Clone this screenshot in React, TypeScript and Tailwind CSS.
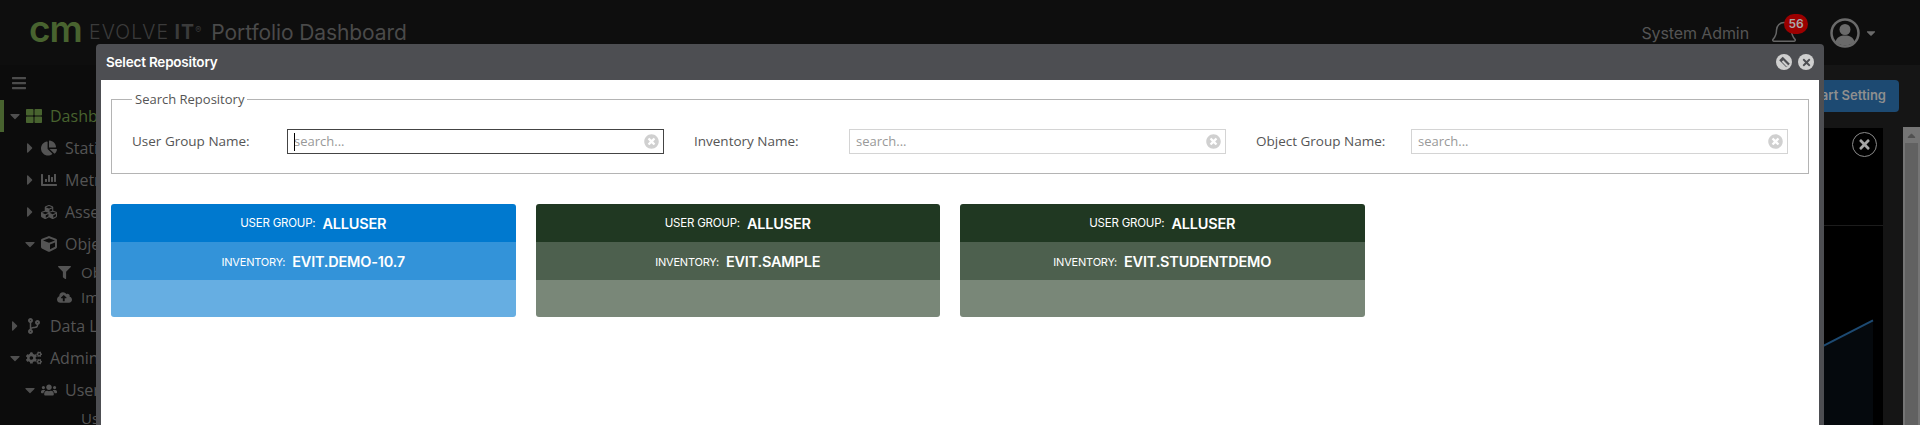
import React from "react";
import { FaBars, FaCaretDown, FaCaretRight, FaCaretUp, FaThLarge, FaChartPie, FaChartBar, FaCubes, FaCube, FaFilter, FaCloudUploadAlt, FaCodeBranch, FaCogs, FaUsers, FaTimes, FaTimesCircle } from "react-icons/fa";
import { Bell } from "lucide-react";

const Row = ({ caret, icon, label, indent, cls = "" }: { caret?: "d" | "r"; icon: React.ReactNode; label: string; indent: number; cls?: string }) => (
  <div className={`flex h-[32px] items-center text-[16px] whitespace-nowrap ${cls}`} style={{ paddingLeft: indent }}>
    <span className="flex w-[16px] shrink-0 justify-center text-[16px] text-[#4f4f4f]">
      {caret === "d" ? <FaCaretDown /> : caret === "r" ? <FaCaretRight /> : null}
    </span>
    <span className="flex w-[22px] shrink-0 justify-center text-[16px]">{icon}</span>
    <span className="ml-[5px]">{label}</span>
  </div>
);

const Search = ({ label, focused }: { label: string; focused?: boolean }) => (
  <div className="flex items-center">
    <label className="w-[155px] shrink-0 text-[13.5px] text-[#555] font-['Open_Sans',sans-serif]">{label}</label>
    <div className={`relative flex h-[25px] w-[377px] items-center border px-[6px] ${focused ? "border-[#444]" : "border-[#d4d4d4]"}`}>
      <input readOnly placeholder="search..." className="w-full bg-transparent text-[13px] text-[#555] outline-none placeholder:text-[#999] font-['Open_Sans',sans-serif]" />
      {focused && <span className="absolute left-[6px] top-[3px] h-[18px] w-px bg-black" />}
      <FaTimesCircle className="absolute right-[4px] top-[4px] text-[15px] text-[#d0d0d0]" />
    </div>
  </div>
);

const Card = ({ inv, top, mid, bot }: { inv: string; top: string; mid: string; bot: string }) => (
  <div className="w-[404.5px] overflow-hidden rounded-[3px] text-white font-['Inter',sans-serif]">
    <div className={`flex h-[38px] items-center justify-center gap-[7px] pt-[2px] ${top}`}>
      <span className="text-[11.5px] tracking-[-0.2px]">USER GROUP:</span>
      <span className="text-[14.5px] font-semibold tracking-[-0.2px]">ALLUSER</span>
    </div>
    <div className={`flex h-[38px] items-center justify-center gap-[7px] pt-[2px] ${mid}`}>
      <span className="text-[11px] tracking-[-0.2px]">INVENTORY:</span>
      <span className="text-[14.5px] font-semibold tracking-[-0.2px]">{inv}</span>
    </div>
    <div className={`h-[37px] ${bot}`} />
  </div>
);

export default function App() {
  return (
    <div className="relative h-[425px] w-[1920px] overflow-hidden bg-[#151515] font-['Open_Sans',sans-serif]">
      {/* Header */}
      <header className="flex h-[65px] items-center bg-[#0e0e0e] pl-[29px] pr-[42px] font-['Inter',sans-serif]">
        <span className="pb-[8px] text-[37px] font-semibold leading-none tracking-[-1px] text-[#48632f]">cm</span>
        <span className="ml-[7px] text-[19.5px] font-light tracking-[1.2px] text-[#3b3b3b]">EVOLVE</span>
        <span className="ml-[5px] text-[19.5px] font-bold tracking-[1.2px] text-[#3b3b3b]">IT</span>
        <span className="mb-[6px] text-[9px] text-[#3b3b3b]">®</span>
        <span className="ml-[10px] text-[21px] tracking-[-0.1px] text-[#4a4a4a]">Portfolio Dashboard</span>
        <span className="ml-auto text-[16px] tracking-[-0.1px] text-[#555]">System Admin</span>
        <div className="relative ml-[18px] h-[34px] w-[40px]">
          <Bell className="absolute left-[2px] top-[2px] h-[34px] w-[30px] text-[#666]" strokeWidth={1.2} />
          <span className="absolute left-[17px] top-[-2px] flex h-[20px] w-[24px] items-center justify-center rounded-full bg-[#9c0000] text-[12px] font-semibold text-[#a9a9a9]">56</span>
        </div>
        <svg className="ml-[23px] h-[30px] w-[30px]" viewBox="0 0 30 30">
          <circle cx="15" cy="15" r="13.5" fill="none" stroke="#6a6a6a" strokeWidth="2.5" />
          <circle cx="15" cy="11.5" r="5.5" fill="#6a6a6a" />
          <path d="M5.5 24c1-5 5-6.5 9.500-6.500s8.500 1.500 9.500 6.500c-5 4.500-14 4.500-19 0z" fill="#6a6a6a" />
        </svg>
        <FaCaretDown className="ml-[4px] text-[14px] text-[#6a6a6a]" />
      </header>

      <div className="flex h-[360px]">
        {/* Sidebar */}
        <aside className="w-[230px] shrink-0 bg-[#0c0c0c] text-[#545454]">
          <div className="flex h-[35px] items-center pl-[11px] text-[16px] text-[#4c4c4c]"><FaBars /></div>
          <div className="border-l-[4px] border-[#48632f]">
            <Row caret="d" icon={<FaThLarge />} label="Dashboard" indent={3} cls="text-[#48632f]" />
          </div>
          <Row caret="r" icon={<FaChartPie />} label="Statistics" indent={22} />
          <Row caret="r" icon={<FaChartBar />} label="Metrics" indent={22} />
          <Row caret="r" icon={<FaCubes />} label="Assets" indent={22} />
          <Row caret="d" icon={<FaCube />} label="Objects" indent={22} />
          <div className="flex h-[25px] items-center whitespace-nowrap pl-[58px] text-[15px]"><FaFilter className="w-[13px] text-[13px]" /><span className="ml-[10px]">Object Groups</span></div>
          <div className="flex h-[25px] items-center whitespace-nowrap pl-[57px] text-[15px]"><FaCloudUploadAlt className="w-[15px] text-[15px]" /><span className="ml-[9px]">Import</span></div>
          <Row caret="r" icon={<FaCodeBranch />} label="Data Lineage" indent={7} />
          <Row caret="d" icon={<FaCogs />} label="Administration" indent={7} />
          <Row caret="d" icon={<FaUsers />} label="Users" indent={22} />
          <div className="flex h-[25px] items-center pl-[81px] text-[15px]">Users</div>
        </aside>

        {/* Main */}
        <main className="flex min-w-0 flex-1">
          <div className="flex min-w-0 flex-1 flex-col pr-[4px]">
            <div className="flex justify-end pt-[15px]">
              <button className="flex h-[32px] w-[124px] items-center justify-end rounded-[4px] bg-[#1d4a72] pr-[13px] text-[13px] font-semibold text-[#8f8f8f] font-['Inter',sans-serif]">Chart Setting</button>
            </div>
            <div className="mr-[16px] mt-[16px] flex min-h-0 flex-1 flex-col bg-black">
              <div className="relative h-[98px] shrink-0 border-b border-[#1c1c1c]">
                <span className="absolute right-[6px] top-[4px] flex h-[25px] w-[25px] items-center justify-center rounded-full border border-[#8a8a8a] text-[15px] text-[#a5a5a5]"><FaTimes /></span>
              </div>
              <svg className="min-h-0 w-full flex-1" viewBox="230 227 1653 198" preserveAspectRatio="none">
                <polygon points="1700,409 1873,321 1873,425 1700,425" fill="#05090d" />
                <polyline points="1700,409 1873,321" stroke="#1d4a72" strokeWidth="2" fill="none" />
              </svg>
            </div>
          </div>
          <div className="mt-[62px] flex w-[17px] shrink-0 flex-col items-center bg-[#757575]">
            <div className="flex h-[16px] shrink-0 items-center justify-center text-[13px] text-[#505050]"><FaCaretUp /></div>
            <div className="w-[13px] flex-1 bg-[#616161]" />
          </div>
        </main>
      </div>

      {/* Modal */}
      <section className="absolute left-[96px] top-[44px] flex h-[381px] w-[1728px] flex-col rounded-t-[4px] bg-[#4d4e52] px-[5px]">
        <div className="flex h-[36px] items-center px-[5px]">
          <h2 className="text-[13.5px] font-semibold tracking-[-0.2px] text-white font-['Inter',sans-serif]">Select Repository</h2>
          <span className="relative ml-auto flex h-[16px] w-[16px] items-center justify-center overflow-hidden rounded-full bg-[#cfcfcf]"><span className="h-[10px] w-[5px] -rotate-45 bg-[#4d4e52]" /><span className="absolute h-[7px] w-[2px] translate-x-[1px] translate-y-[1px] -rotate-45 bg-[#cfcfcf]" /></span>
          <span className="ml-[6px] flex h-[16px] w-[16px] items-center justify-center rounded-full bg-[#cfcfcf] text-[11px] text-[#4d4e52]"><FaTimes /></span>
        </div>
        <div className="flex-1 bg-white px-[10px] pt-[11px]">
          <fieldset className="h-[83px] border border-[#b4b4b4] px-[20px]">
            <legend className="px-[3px] text-[13px] leading-[17px] text-[#555]">Search Repository</legend>
            <div className="mt-[21px] flex gap-[30px]">
              <Search label="User Group Name:" focused />
              <Search label="Inventory Name:" />
              <Search label="Object Group Name:" />
            </div>
          </fieldset>
          <div className="mt-[30px] flex gap-[20px]">
            <Card inv="EVIT.DEMO-10.7" top="bg-[#0079cf]" mid="bg-[#3393d9]" bot="bg-[#66aee2]" />
            <Card inv="EVIT.SAMPLE" top="bg-[#203822]" mid="bg-[#4d604e]" bot="bg-[#798778]" />
            <Card inv="EVIT.STUDENTDEMO" top="bg-[#203822]" mid="bg-[#4d604e]" bot="bg-[#798778]" />
          </div>
        </div>
      </section>
    </div>
  );
}
